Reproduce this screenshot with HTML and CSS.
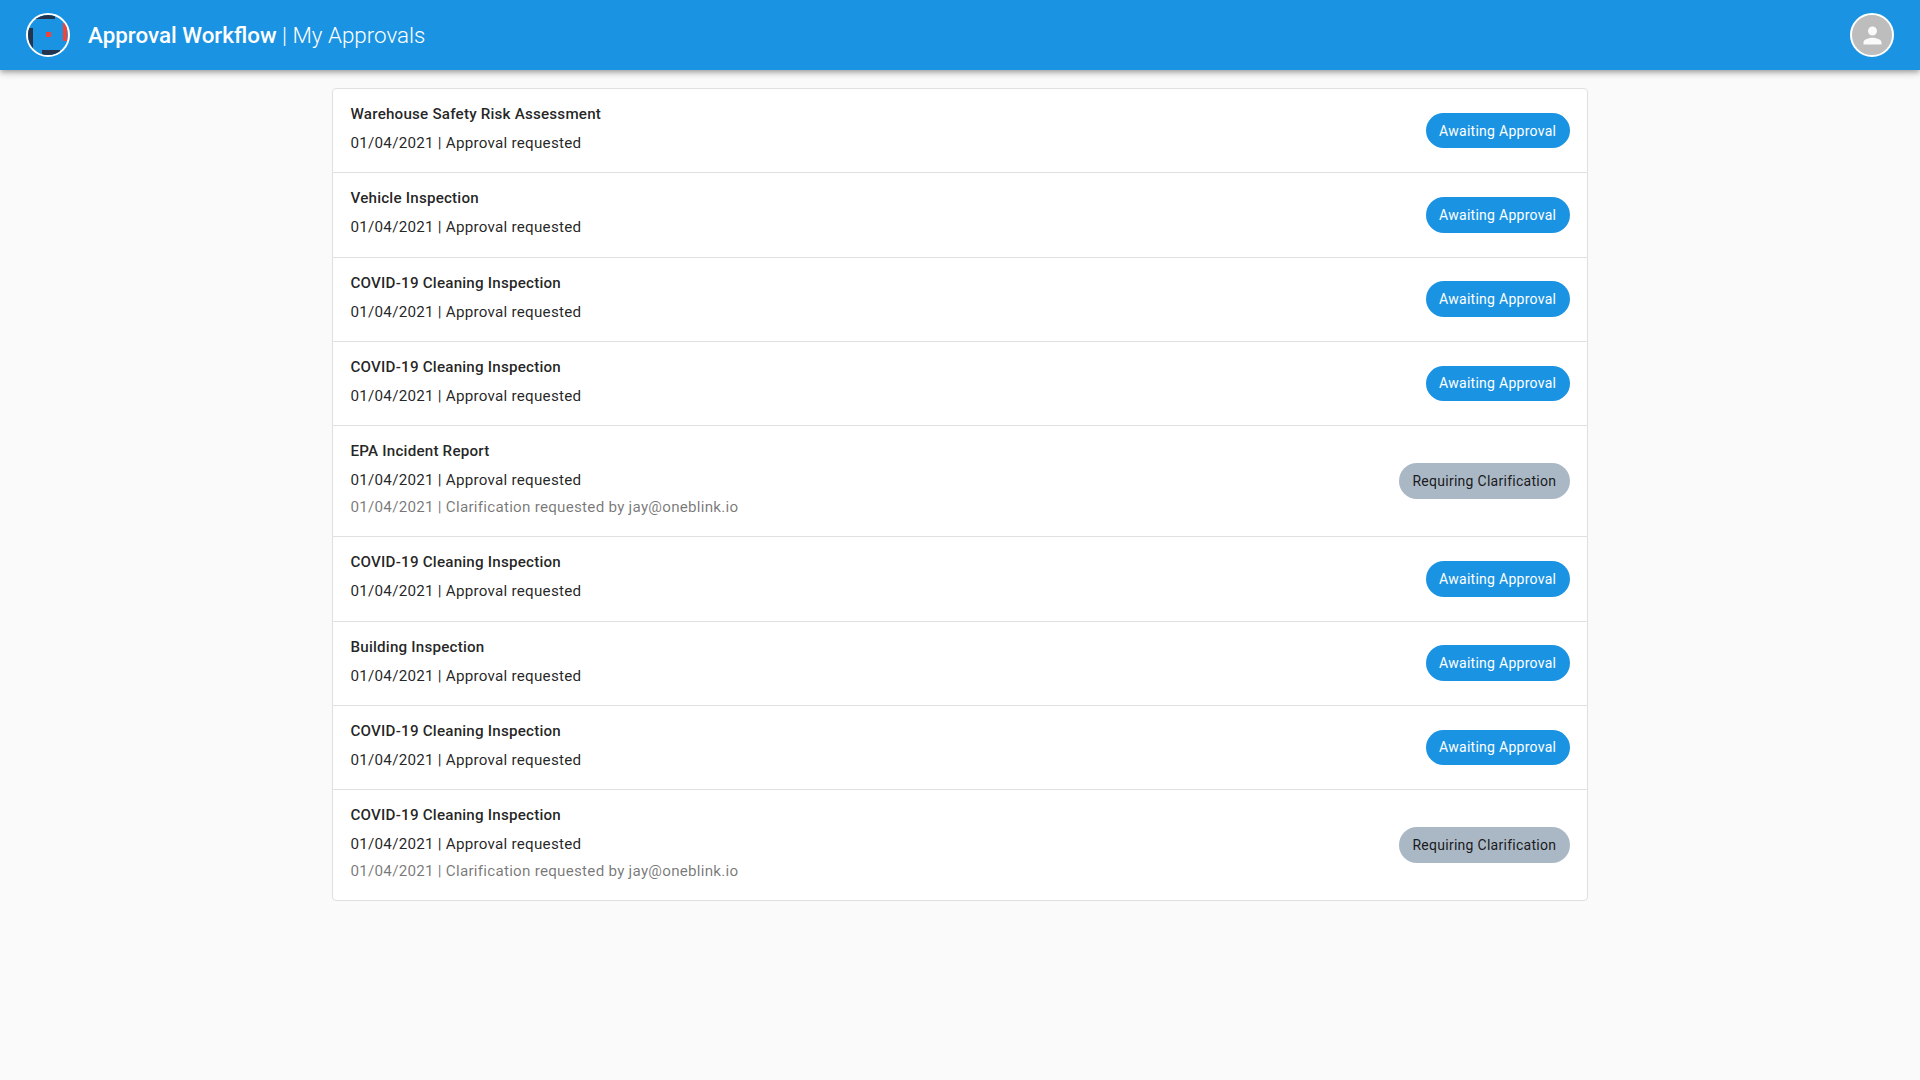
FILE: index.html
```html
<!DOCTYPE html>
<html lang="en">
<head>
<meta charset="utf-8">
<title>Approval Workflow | My Approvals</title>
<link rel="stylesheet" href="styles.css">
</head>
<body>
<header class="topbar">
  <div class="brand">
    <div class="avatar logo">
      <svg class="logo-svg" viewBox="0 0 40 40" width="40" height="40">
        <path fill="#24344d" d="M7 0h20v4H7zM0 13h5v20H0zM14 35h18v5H14z"/>
        <path fill="#f44336" d="M35 8h4v18h-4zM18 17h5v5h-5z"/>
      </svg>
    </div>
    <div class="app-title"><span class="app-name">Approval Workflow</span> | My Approvals</div>
  </div>
  <div class="avatar user">
    <svg viewBox="0 0 24 24" width="27" height="27"><path fill="#fafafa" d="M12 12c2.21 0 4-1.79 4-4s-1.79-4-4-4-4 1.79-4 4 1.79 4 4 4zm0 2c-2.67 0-8 1.34-8 4v2h16v-2c0-2.66-5.33-4-8-4z"/></svg>
  </div>
</header>
<main class="content">
  <ul class="card">
    <li class="row"><div><div class="name">Warehouse Safety Risk Assessment</div><div class="line">01/04/2021 | Approval requested</div></div><span class="chip chip-blue">Awaiting Approval</span></li>
    <li class="row"><div><div class="name">Vehicle Inspection</div><div class="line">01/04/2021 | Approval requested</div></div><span class="chip chip-blue">Awaiting Approval</span></li>
    <li class="row"><div><div class="name">COVID-19 Cleaning Inspection</div><div class="line">01/04/2021 | Approval requested</div></div><span class="chip chip-blue">Awaiting Approval</span></li>
    <li class="row"><div><div class="name">COVID-19 Cleaning Inspection</div><div class="line">01/04/2021 | Approval requested</div></div><span class="chip chip-blue">Awaiting Approval</span></li>
    <li class="row"><div><div class="name">EPA Incident Report</div><div class="line">01/04/2021 | Approval requested</div><div class="line muted">01/04/2021 | Clarification requested by jay@oneblink.io</div></div><span class="chip chip-grey">Requiring Clarification</span></li>
    <li class="row"><div><div class="name">COVID-19 Cleaning Inspection</div><div class="line">01/04/2021 | Approval requested</div></div><span class="chip chip-blue">Awaiting Approval</span></li>
    <li class="row"><div><div class="name">Building Inspection</div><div class="line">01/04/2021 | Approval requested</div></div><span class="chip chip-blue">Awaiting Approval</span></li>
    <li class="row"><div><div class="name">COVID-19 Cleaning Inspection</div><div class="line">01/04/2021 | Approval requested</div></div><span class="chip chip-blue">Awaiting Approval</span></li>
    <li class="row"><div><div class="name">COVID-19 Cleaning Inspection</div><div class="line">01/04/2021 | Approval requested</div><div class="line muted">01/04/2021 | Clarification requested by jay@oneblink.io</div></div><span class="chip chip-grey">Requiring Clarification</span></li>
  </ul>
</main>
</body>
</html>
```
FILE: styles.css
```css
* { box-sizing: border-box; }
html, body { height: 100%; }
body {
  margin: 0;
  background: #fafafa;
  color: rgba(0,0,0,.87);
  font-family: Roboto, "Noto Sans", sans-serif;
  font-size: 15.2px;
}
.topbar {
  height: 70px;
  background: #1b93e3;
  display: flex;
  align-items: center;
  justify-content: space-between;
  padding: 0 26px;
  box-shadow: 0 2px 4px -1px rgba(0,0,0,.2), 0 4px 5px rgba(0,0,0,.14), 0 1px 10px rgba(0,0,0,.12);
}
.brand { display: flex; align-items: center; gap: 18px; }
.avatar {
  width: 44px;
  height: 44px;
  border-radius: 50%;
  border: 2px solid #fff;
  display: flex;
  align-items: center;
  justify-content: center;
  overflow: hidden;
}
.logo-svg { flex: none; }
.user { background: #bdbdbd; }
.app-title {
  color: #fff;
  font-size: 22.4px;
  font-weight: 300;
}
.app-name { font-weight: 500; }
.content { padding: 18px 0; display: flex; justify-content: center; }
.card {
  width: 1256px;
  list-style: none;
  margin: 0;
  padding: 0;
  background: #fff;
  border: 1px solid #e0e0e0;
  border-radius: 4px;
}
.row {
  display: flex;
  align-items: center;
  justify-content: space-between;
  padding: 13px 17.5px 15.25px;
  border-bottom: 1px solid #e0e0e0;
}
.row:last-child { border-bottom: 0; }
.name { font-weight: 500; line-height: 24px; margin-bottom: 3px; letter-spacing: .2px; }
.line { line-height: 28px; letter-spacing: .25px; }
.line + .line { line-height: 27px; }
.muted { color: rgba(0,0,0,.54); }
.chip {
  height: 35.5px;
  margin-top: 2px;
  border-radius: 18px;
  padding: 0 13.3px;
  display: inline-flex;
  align-items: center;
  font-size: 14px;
  letter-spacing: .27px;
}
.chip-blue { background: #1b93e3; color: #fff; }
.chip-grey { background: #aab7c4; color: rgba(0,0,0,.87); }
```
